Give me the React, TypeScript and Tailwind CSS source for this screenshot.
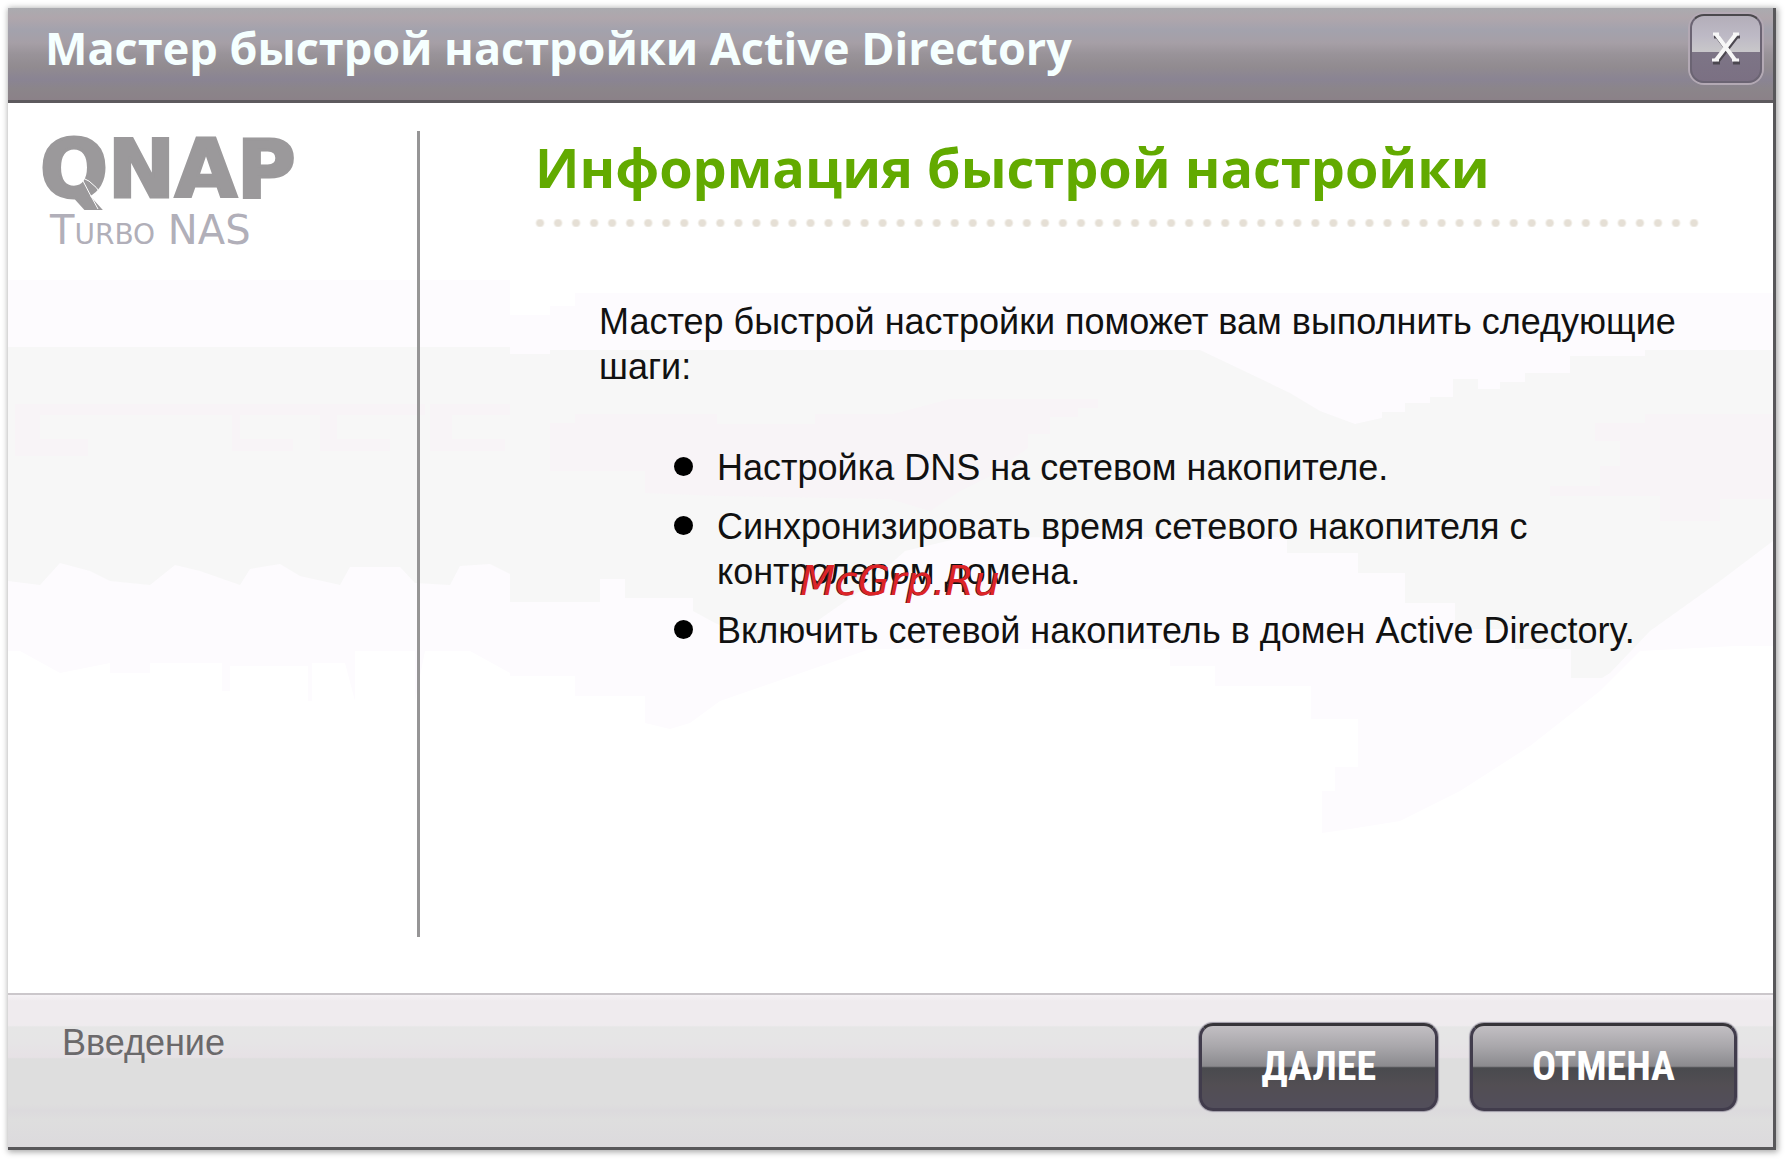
const steps = [
  'Настройка DNS на сетевом накопителе.',
  'Синхронизировать время сетевого накопителя с контролером домена.',
  'Включить сетевой накопитель в домен Active Directory.',
];

const Logo = () => (
  <div className="pl-5">
    <svg width="360" height="128" viewBox="0 0 360 128" role="img" aria-label="QNAP Turbo NAS">
      <text x="12" y="66" fill="#9b999b" stroke="#9b999b" strokeWidth="3" className="font-['DejaVu_Sans'] text-[80px] font-bold">QNAP</text>
      <path d="M53 46 Q70 52 80 76 M53 46 Q60 60 70 78" stroke="#ffffff" strokeWidth="1" fill="none" />
      <text x="22" y="113" fill="#b1afb9" className="font-['DejaVu_Sans'] text-[40px] [font-variant-caps:small-caps]">Turbo NAS</text>
    </svg>
  </div>
);

const CloseButton = () => (
  <button
    type="button"
    aria-label="Закрыть"
    className="mr-[11px] flex h-[69px] w-[72px] items-center justify-center rounded-[14px] border-2 border-[#6b6473] border-t-[#4b494d] bg-[linear-gradient(#b3aeb9_0%,#bdb9c5_30%,#c9c8ca_56%,#7d7586_56%,#7b7083_100%)] shadow-[0_0_0_2px_#b3a9b4]"
  >
    <svg width="36" height="36" viewBox="0 0 36 36" fill="none">
      <path d="M5 4h6M25 4h6M8 4l20 26M28 4L8 30M4 30h7M24 30h7" stroke="#4c4850" strokeWidth="3" transform="translate(1 2)" />
      <path d="M8 3l19 26M28 3L8 29" stroke="#f7f7f7" strokeWidth="4" />
      <path d="M5 3h6M25 3h6M4 29h7M24 29h7" stroke="#f7f7f7" strokeWidth="3" />
    </svg>
  </button>
);

// faint world-map style shapes behind the content
const Backdrop = () => (
  <svg className="absolute inset-0 -z-10 h-full w-full" viewBox="8 102 1765 890" preserveAspectRatio="none" aria-hidden="true">
    <path
      fill="#fdfbfe"
      d="M8 279H510V314H550V305H575V292H1773V645H1735L1640 650L1600 690L1530 745L1460 790L1400 820L1350 828L1322 832V790H1335V766H1358V718H1311V685H1215V665H1170V648H870L720 700L690 722L670 728L645 722V695H575V675H510V672L470 650L425 650L415 700V650H355V700L345 662H312V700H308V665H230V690H222V662H150V672H110V662L60 672L20 650H8Z"
    />
    <path
      fill="#f7f7f7"
      d="M8 346H510V353H550V349H1200L1240 368L1290 392L1320 410L1355 423L1382 417V411H1405V402H1430V396H1453V378H1478V388H1500V381H1525V372H1570V355H1645V349H1773V540L1720 580L1650 630L1610 672L1602 677H1571V648H1515V628H1455V602H1405V572H1358V552H1287V536H1060L960 537L905 550L860 590L800 632L760 640L715 622L693 610V597H625V578H600V601H510V573L490 563L460 565L450 584L415 582L400 566L350 566L340 584L300 575L280 563L250 568L240 584L200 570L175 564L150 584L110 580L90 570L60 562L40 584L8 580Z"
    />
    <path fill="#f8f4f7" d="M15 403H425V414H337V438H390V450H320V414H240V438H293V450H232V414H40V438H88V455H15ZM430 403H510V414H452V438H505V450H430ZM550 422H575V413H717V423H815V413H893L950 398H1098V407H1078V416H1050V433H1028V447L990 475L960 490L930 510L890 498L720 495L645 492V470H550Z" />
    <path fill="#f8f4f7" d="M1595 422H1645V413H1773V498H1720V520H1660V495H1550V485H1600V465H1620V440H1595Z" />
  </svg>
);

const WizardButton = ({ label }: { label: string }) => (
  <button
    type="button"
    className="h-[88px] rounded-[14px] border-[3px] border-[#413c4c] border-t-[#363439] bg-[linear-gradient(#c2bfc3_0%,#a9a7ab_25%,#8b8a8e_49%,#494a4e_51%,#524e53_72%,#524e5b_100%)] px-[59px] font-['Roboto_Condensed',Roboto,sans-serif] text-[40px] font-bold text-white shadow-[0_0_1px_1px_#9d99a6]"
  >
    {label}
  </button>
);

const App = () => {
  return (
    <div className="flex min-h-screen bg-white pt-2 pr-2.5 pb-[9px] pl-2 font-['Liberation_Sans',sans-serif]">
      <div className="relative flex flex-1 flex-col border-r-[3px] border-b-[3px] border-[#58575a] bg-white shadow-[1px_1px_6px_1px_rgba(0,0,0,0.35)]">
        <header className="flex h-[95px] items-start justify-between border-b-[3px] border-[#5d5a5e] bg-[linear-gradient(#aaabaf_0%,#afa6ac_11%,#a3a2ad_24%,#a69fa6_38%,#999399_50%,#918b90_64%,#8a8493_78%,#8b858a_88%,#8b8188_100%)] pt-1.5">
          <h1 className="pt-0.5 pl-[37px] font-['Open_Sans',sans-serif] text-[45px] leading-16 font-bold text-[#f5ffff]">
            Мастер быстрой настройки Active Directory
          </h1>
          <CloseButton />
        </header>

        <div className="relative isolate flex flex-1">
          <Backdrop />
          <aside className="mt-7 mb-14 w-[412px] shrink-0 border-r-[3px] border-[#969596]">
            <Logo />
          </aside>
          <main className="flex-1 pt-7 pr-[69px] pl-[111px]">
            <h2 className="pl-1 font-['Open_Sans',sans-serif] text-[54px] leading-[72px] font-bold text-[#62aa00]">
              Информация быстрой настройки
            </h2>
            <div className="mt-4 h-2 bg-[radial-gradient(circle,#e5dfd5_3px,transparent_5px)] bg-[length:18px_8px] bg-repeat-round" />
            <div className="mt-18 pl-[68px] text-[36px] leading-[45px] text-[#111111]">
              <p>Мастер быстрой настройки поможет вам выполнить следующие шаги:</p>
              <ul className="mt-14 flex flex-col gap-[14px]">
                {steps.map((step) => (
                  <li key={step} className="flex gap-6 pl-[75px]">
                    <span className="mt-3 size-[19px] shrink-0 rounded-full bg-black" />
                    <span>{step}</span>
                  </li>
                ))}
              </ul>
            </div>
          </main>
        </div>

        <footer className="flex items-start justify-between border-t-2 border-[#cbc7cb] bg-[linear-gradient(#f5f2f5_0%,#efebee_4%,#efebee_20%,#e6e6e6_21%,#e6e5e6_31%,#e6e1e5_41%,#dedede_42%,#dedede_72%,#dcdadd_76%,#dedede_82%,#dcdadd_100%)] pt-7 pr-9 pb-9 pl-[54px]">
          <span className="text-[36px] leading-10 text-[#6b696b]">Введение</span>
          <div className="flex gap-8">
            <WizardButton label="ДАЛЕЕ" />
            <WizardButton label="ОТМЕНА" />
          </div>
        </footer>

        <span className="absolute top-[553px] left-[792px] font-['DejaVu_Sans',sans-serif] text-[41px] leading-10 text-[#dd2427] italic [text-shadow:-1px_0_0_#5a1a1c]">
          McGrp.Ru
        </span>
      </div>
    </div>
  );
};

export default App;
